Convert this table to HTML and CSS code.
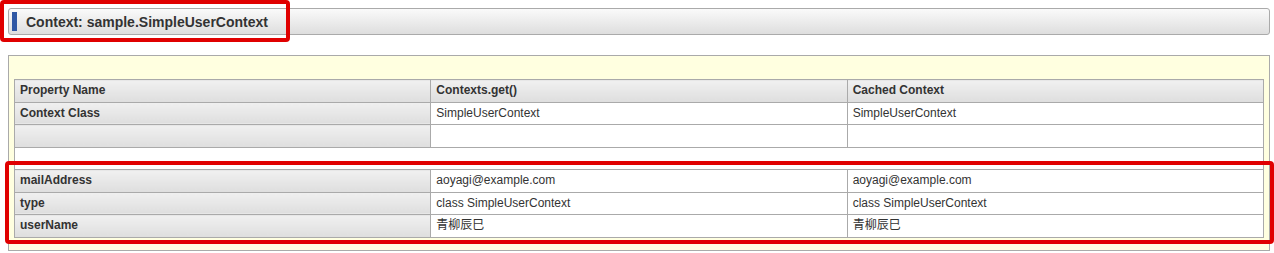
FILE: index.html
```html
<!DOCTYPE html>
<html lang="ja">
<head>
<meta charset="utf-8">
<title>Context: sample.SimpleUserContext</title>
<link rel="stylesheet" href="styles.css">
</head>
<body>
<div class="page">
  <h2 class="section-title"><span class="title-mark"></span>Context: sample.SimpleUserContext</h2>
  <div class="panel">
    <table class="props">
      <colgroup><col><col><col></colgroup>
      <thead>
        <tr><th>Property Name</th><th>Contexts.get()</th><th>Cached Context</th></tr>
      </thead>
      <tbody>
        <tr><th>Context Class</th><td>SimpleUserContext</td><td>SimpleUserContext</td></tr>
        <tr><th></th><td></td><td></td></tr>
        <tr class="spacer"><td colspan="3"></td></tr>
        <tr><th>mailAddress</th><td>aoyagi@example.com</td><td>aoyagi@example.com</td></tr>
        <tr><th>type</th><td>class SimpleUserContext</td><td>class SimpleUserContext</td></tr>
        <tr><th>userName</th><td>青柳辰巳</td><td>青柳辰巳</td></tr>
      </tbody>
    </table>
  </div>
  <div class="mark mark-title"></div>
  <div class="mark mark-rows"></div>
</div>
</body>
</html>
```

FILE: styles.css
```css
html, body {
  margin: 0;
  padding: 0;
  background: #fff;
}

body {
  font-family: "Liberation Sans", Arial, "Noto Sans CJK JP", sans-serif;
  font-size: 12px;
  color: #333;
}

.page {
  position: relative;
  padding: 8px 4px 0 8px;
}

.section-title {
  margin: 0;
  height: 25px;
  display: flex;
  align-items: center;
  gap: 9px;
  padding: 0 0 0 3px;
  border: 1px solid #aaa;
  border-radius: 3px;
  background: linear-gradient(#fafafa, #dedede);
  font-size: 14px;
  font-weight: bold;
  color: #333;
}

.title-mark {
  width: 5px;
  height: 19px;
  background: #2f57a4;
}

.panel {
  margin-top: 20px;
  border: 1px solid #aaa;
  background: #ffffe0;
  padding: 23px 5px 12px 5px;
}

.props {
  width: 100%;
  table-layout: fixed;
  border-collapse: collapse;
  background: #fff;
  border: 1px solid #aaa;
}

.props th,
.props td {
  border: 1px solid #aaa;
  padding: 4px 5px;
  line-height: 13.5px;
  height: 13.5px;
  text-align: left;
  vertical-align: middle;
  white-space: nowrap;
}

.props th {
  font-weight: bold;
  background: linear-gradient(#f0f0f0, #dedede);
}

.props td {
  font-weight: normal;
  background: #fff;
}

.props .spacer td {
  border-left: 1px solid #aaa;
  border-right: 1px solid #aaa;
}

.mark {
  position: absolute;
  border: 4px solid #e00000;
  border-radius: 4px;
  box-sizing: border-box;
  pointer-events: none;
}

.mark-title {
  left: 0;
  top: 0;
  width: 290px;
  height: 42px;
}

.mark-rows {
  left: 5px;
  top: 161px;
  width: 1269px;
  height: 83px;
}
```
